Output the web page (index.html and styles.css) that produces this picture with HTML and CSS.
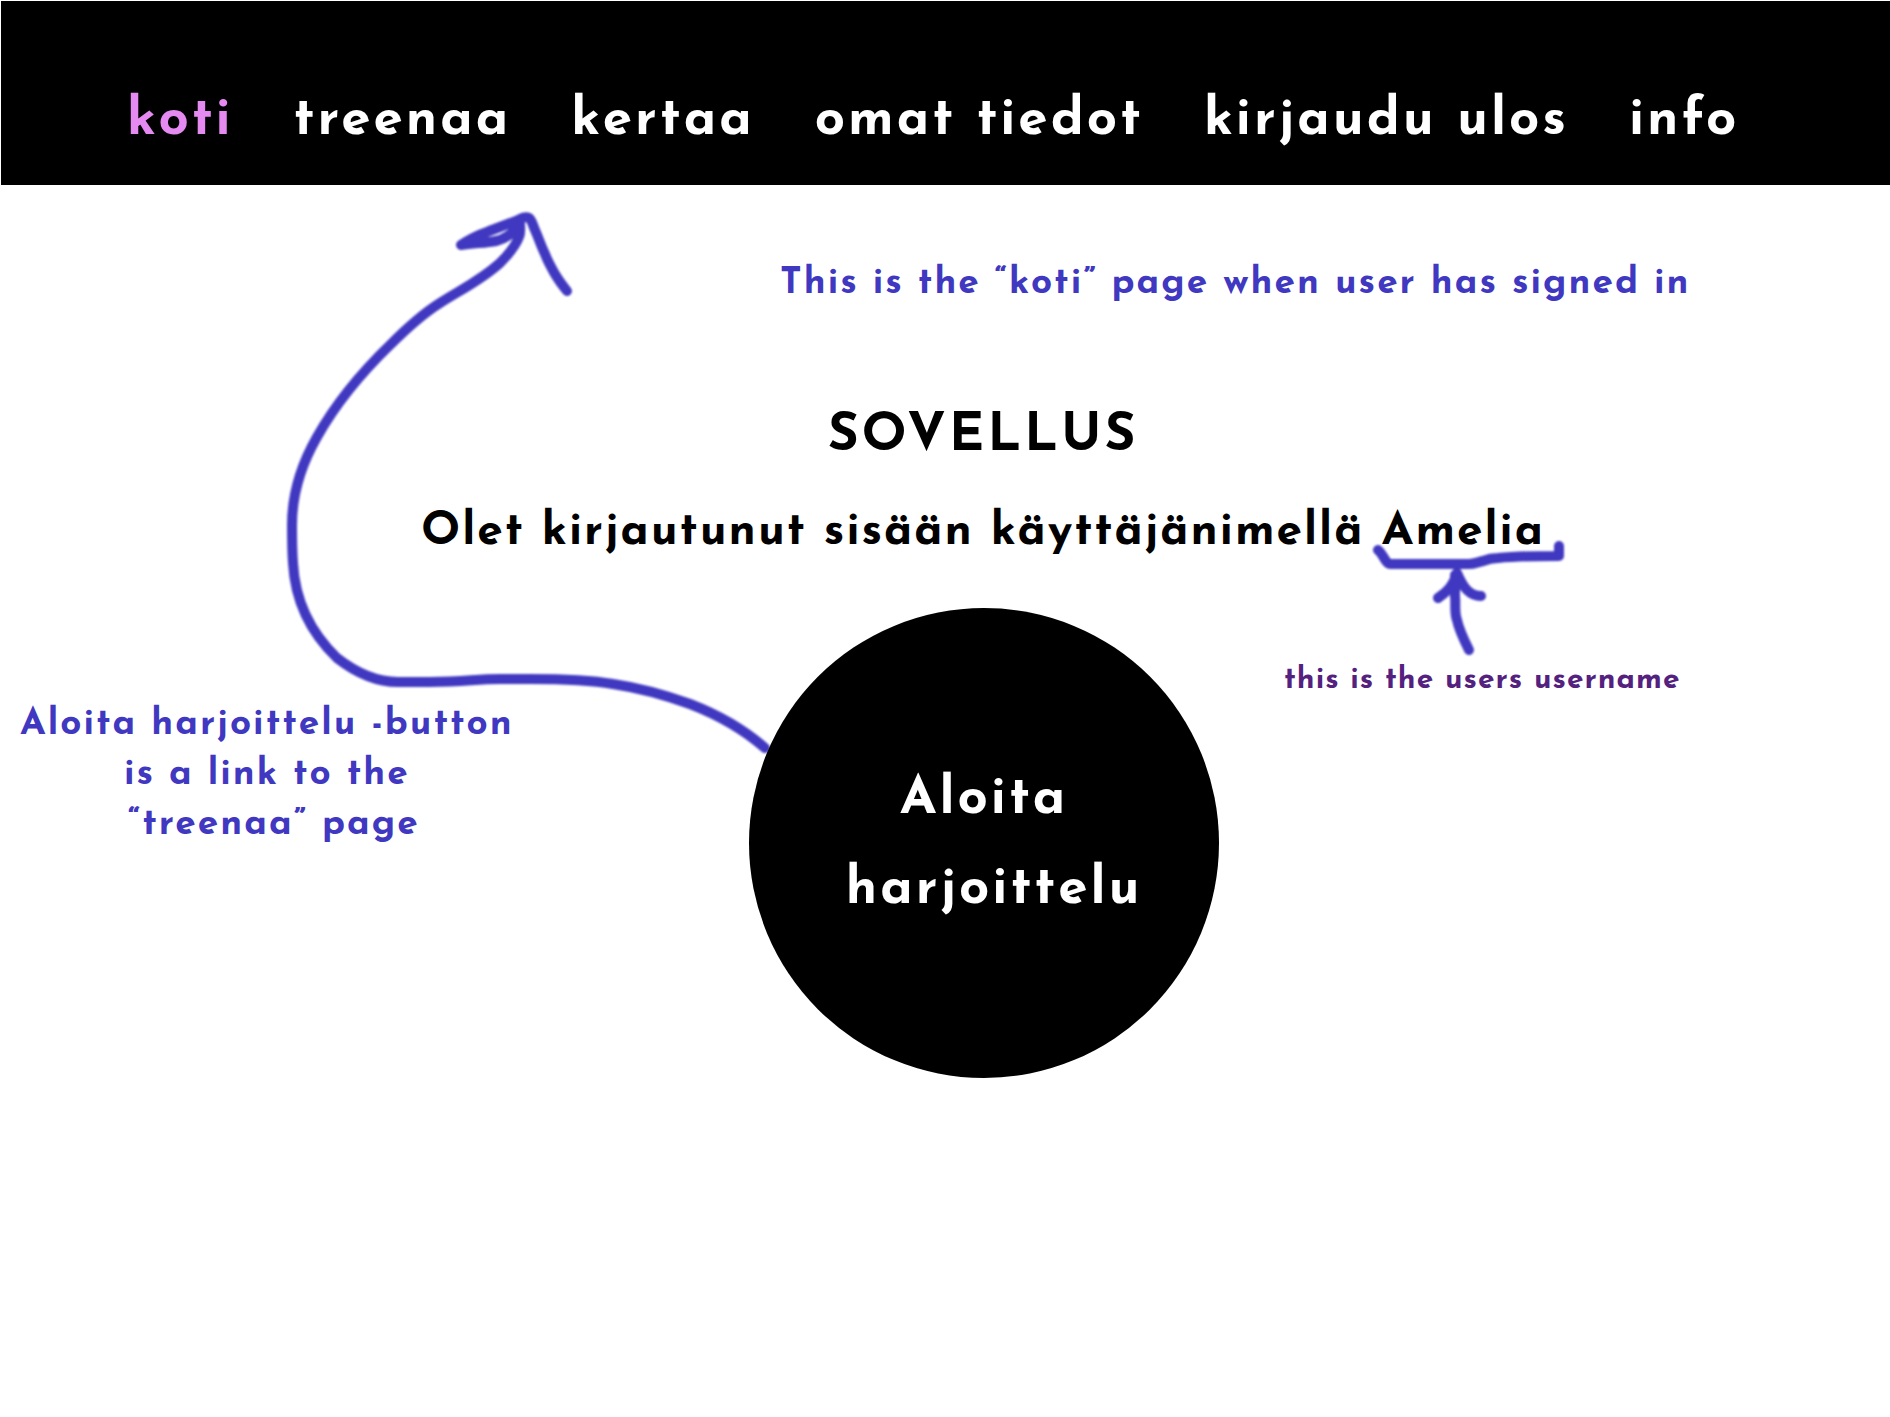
FILE: index.html
```
<!DOCTYPE html>
<html lang="fi">
<head>
  <meta charset="utf-8">
  <meta name="viewport" content="width=device-width, initial-scale=1">
  <title>Sovellus</title>
  <link rel="stylesheet" href="styles.css">
</head>
<body>
  <header class="site-header">
    <nav class="site-nav">
      <a class="nav-link nav-link-current" href="#koti" aria-current="page">koti</a>
      <a class="nav-link" href="#treenaa">treenaa</a>
      <a class="nav-link" href="#kertaa">kertaa</a>
      <a class="nav-link" href="#omat-tiedot">omat tiedot</a>
      <a class="nav-link" href="#kirjaudu-ulos">kirjaudu ulos</a>
      <a class="nav-link" href="#info">info</a>
    </nav>
  </header>

  <main class="home">
    <p class="note note-page" lang="en">This is the “koti” page when user has signed in</p>
    <h1 class="title">SOVELLUS</h1>
    <p class="status">Olet kirjautunut sisään käyttäjänimellä Amelia</p>
    <p class="note note-link" lang="en">Aloita harjoittelu -button<br>is a link to the<br>&nbsp;“treenaa” page</p>
    <a class="start" href="#treenaa">Aloita<br>&nbsp;harjoittelu</a>
    <p class="note note-user" lang="en">this is the users username</p>
  </main>

  <svg class="ink" viewBox="0 0 1890 1417" aria-hidden="true">
    <!-- arrow from the start button to the menu -->
    <path d="M765 748C741 727 716 714 690 704C665 695 640 688 613 684C590 680 562 679 530 679H500C475 679 465 682 430 682H398C375 682 355 672 337 658C310 632 295 600 293 563C292 549 292 540 292 525C292 493 301 465 317 437C335 405 360 374 390 345C407 328 424 313 440 303C460 290 480 281 500 263C507 256 515 247 519 237C521 232 520 227 520 224C514 232 505 239 496 241C486 243 474 243 461 245C470 239 478 235 487 232C499 227 509 224 520 219C524 217 527 217 529 218C532 220 533 226 535 230C539 239 541 246 545 254C548 262 551 267 555 274C559 281 563 286 567 291"/>
    <!-- bracket under the username -->
    <path d="M1378 550C1382 553 1383 557 1386 561Q1388 564 1391 564H1469C1474 564 1478 562 1483 561C1488 559 1493 558 1498 558C1518 556 1539 556 1559 556V546"/>
    <!-- arrow to the username -->
    <path d="M1469 650C1464 640 1459 630 1457 620C1454 612 1456 604 1455 596V575"/>
    <path d="M1438 598C1447 592 1453 586 1457 573C1460 580 1463 586 1467 590C1471 594 1476 596 1481 596"/>
  </svg>
</body>
</html>
```
FILE: styles.css
```
* {
  box-sizing: border-box;
}

body {
  position: relative;
  margin: 0;
  min-height: 100vh;
  background: #fff;
  color: #000;
  font-family: "Josefin Sans", Lato, sans-serif;
  font-weight: 700;
  letter-spacing: 3px;
}

h1,
p {
  margin: 0;
}

.site-header {
  margin: 1px 0 0 1px;
  padding: 88px 24px 32px 126px;
  background: #000;
}

.site-nav {
  display: flex;
  flex-wrap: wrap;
  column-gap: 60px;
}

.nav-link {
  color: #fff;
  font-size: 53px;
  line-height: 64px;
  text-decoration: none;
}

.nav-link-current {
  color: #e58af0;
}

.home {
  display: grid;
  grid-template-columns: 749fr 470fr 671fr;
  align-items: start;
  padding-top: 74px;
}

.title,
.status {
  grid-column: 1 / -1;
  padding-left: 76px;
  line-height: 64px;
  text-align: center;
}

.title {
  margin-top: 96px;
  font-size: 53px;
}

.status {
  margin: 32px 0 43px;
  font-size: 46px;
  letter-spacing: 2px;
}

.note {
  color: #4038c0;
  font-size: 37px;
  line-height: 50px;
  letter-spacing: 2px;
}

.note-page {
  grid-column: 2 / -1;
  padding-left: 31px;
}

.note-link {
  justify-self: start;
  margin-top: 92px;
  padding-left: 20px;
  text-align: center;
}

.note-user {
  margin-top: 53px;
  padding-left: 65px;
  color: #54217f;
  font-size: 30px;
  line-height: 40px;
  letter-spacing: 1px;
}

.start {
  z-index: 1;
  display: flex;
  align-items: center;
  justify-content: center;
  aspect-ratio: 1;
  padding-top: 4px;
  border-radius: 50%;
  background: #000;
  color: #fff;
  font-size: 53px;
  line-height: 90px;
  text-align: center;
  text-decoration: none;
}

.ink {
  position: absolute;
  top: 0;
  left: 0;
  width: 100%;
  fill: none;
  stroke: #4038c0;
  stroke-width: 10px;
  stroke-linecap: round;
  stroke-linejoin: round;
  filter: blur(1px);
  pointer-events: none;
}
```
